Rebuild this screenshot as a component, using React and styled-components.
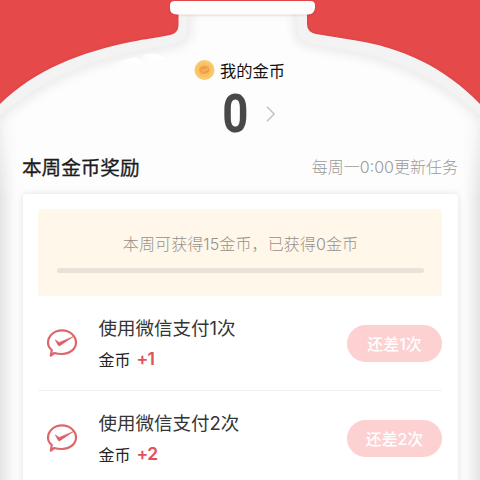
import React from 'react';
import styled, { createGlobalStyle } from 'styled-components';

const GlobalStyle = createGlobalStyle`
  * { box-sizing: border-box; }
  body {
    margin: 0;
    overflow: hidden;
    background: #e6494a;
    font-family: "Noto Sans CJK SC", "Noto Sans", sans-serif;
  }
`;

const Page = styled.main`
  position: relative;
  width: 480px;
  height: 480px;
  overflow: hidden;
  background: #e6494a;
`;

const BottleArt = styled.svg`
  position: absolute;
  inset: 0;
  display: block;
`;

const Content = styled.div`
  position: relative;
  display: flex;
  flex-direction: column;
  padding: 58px 22px 0 23px;
`;

const Balance = styled.header`
  display: flex;
  flex-direction: column;
`;

const BalanceLabel = styled.div`
  display: flex;
  align-items: center;
  gap: 5px;
  height: 24px;
  padding-left: 171px;
  font-size: 16.3px;
  line-height: 24px;
  color: #111;
`;

const BalanceValue = styled.div`
  display: flex;
  align-items: center;
  gap: 16px;
  height: 64px;
  padding-left: 197px;
`;

const Amount = styled.strong`
  font: 700 53px/64px Roboto, sans-serif;
  color: #48484a;
  transform: scaleX(0.86);
`;

const SectionHead = styled.div`
  display: flex;
  align-items: center;
  justify-content: space-between;
  height: 41px;
  margin: 0 0 7px -1px;
`;

const SectionTitle = styled.h2`
  margin: 0;
  font-size: 19.6px;
  font-weight: 400;
  line-height: 30px;
  color: #1c1c1c;
  -webkit-text-stroke: 0.3px #1c1c1c;
`;

const Digits = styled.span`
  font-family: Inter, sans-serif;
`;

const RefreshNote = styled.span`
  font-size: 16px;
  font-weight: 300;
  line-height: 24px;
  color: #999;
`;

const Card = styled.section`
  height: 310px;
  padding: 15px 16px 0 15px;
  border-radius: 3px;
  background: #fff;
  box-shadow: 0 0 6px rgba(0, 0, 0, 0.12);
`;

const Progress = styled.div`
  display: flex;
  flex-direction: column;
  align-items: center;
  height: 87px;
  padding: 22px 18px 0 19px;
  border-radius: 2px;
  background: #fef7ea;
`;

const ProgressText = styled.p`
  margin: 0;
  font-size: 16px;
  letter-spacing: 0.1px;
  font-weight: 300;
  line-height: 24px;
  white-space: nowrap;
  color: #96918b;
`;

const Track = styled.div`
  width: 100%;
  height: 5px;
  margin-top: 12px;
  border-radius: 3px;
  background: #eae2d8;
`;

const TaskList = styled.ul`
  margin: 0;
  padding: 0;
  list-style: none;
`;

const Task = styled.li`
  display: flex;
  align-items: center;
  height: 95px;
  padding-left: 8px;
  border-bottom: 1px solid #f2f2f2;
`;

const TaskBody = styled.div`
  flex: 1;
  margin: 0 0 0 20.5px;
`;

const TaskTitle = styled.div`
  font-size: 18.5px;
  line-height: 31px;
  color: #353535;
`;

const TaskReward = styled.div`
  display: flex;
  gap: 6px;
  font-size: 16px;
  line-height: 30px;
  color: #222;
`;

const Gain = styled.span`
  font-family: Inter, sans-serif;
  font-size: 17.5px;
  font-weight: 600;
  letter-spacing: -0.7px;
  color: #df5157;
`;

const Remaining = styled.button`
  width: 95px;
  height: 37px;
  padding: 0;
  border: 0;
  border-radius: 19px;
  background: #fdd0d1;
  color: #fff;
  font: 500 15.9px/37px "Noto Sans CJK SC", sans-serif;
`;

const OUTER =
  'M178.5 8V25Q178.5 33 170 35C155 38 145 39 133 41.5C80 52 35 70 0 104V490H480V104C445 67 400 47 353 40L316 34Q307 32 307 24V8Z';
const INNER =
  'M187 8V30Q187 40 176 43C158 47 146 49 135 51C80 62 38 82 -6 120V500H486V120C444 80 398 59 350 50L310 43Q298 40 298 30V8Z';

const Bottle = () => (
  <BottleArt width="480" height="480" viewBox="0 0 480 480" aria-hidden="true">
    <defs>
      <clipPath id="inside">
        <path d={INNER} />
      </clipPath>
      <filter id="soft" x="-20%" y="-20%" width="140%" height="140%">
        <feGaussianBlur stdDeviation="5" />
      </filter>
      <filter id="edge" x="-10%" y="-10%" width="120%" height="120%">
        <feGaussianBlur stdDeviation="1.6" />
      </filter>
      <linearGradient id="glint" x1="0" y1="1" x2="1" y2="0">
        <stop offset="0" stopColor="#fff" stopOpacity="0" />
        <stop offset="0.6" stopColor="#fff" />
      </linearGradient>
      <linearGradient id="wallLeft">
        <stop offset="0" stopColor="#e4e4e4" />
        <stop offset="0.4" stopColor="#f1f1f1" />
        <stop offset="1" stopColor="#fcfcfc" stopOpacity="0" />
      </linearGradient>
      <linearGradient id="wallRight" x1="1" x2="0">
        <stop offset="0" stopColor="#e4e4e4" />
        <stop offset="0.4" stopColor="#f1f1f1" />
        <stop offset="1" stopColor="#fcfcfc" stopOpacity="0" />
      </linearGradient>
      <linearGradient id="wallFade" gradientUnits="userSpaceOnUse" x1="0" y1="105" x2="0" y2="200">
        <stop offset="0" stopColor="#000" />
        <stop offset="1" stopColor="#fff" />
      </linearGradient>
      <mask id="wallMask" maskUnits="userSpaceOnUse" x="0" y="0" width="480" height="480">
        <rect width="480" height="480" fill="url(#wallFade)" />
      </mask>
    </defs>
    <path d={OUTER} fill="#a82f32" opacity="0.35" filter="url(#edge)" />
    <path d={OUTER} fill="#f3f3f3" />
    <g clipPath="url(#inside)">
      <path d={INNER} fill="#fdfdfd" />
      <path d={INNER} fill="none" stroke="#e9e9e9" strokeWidth="9" filter="url(#soft)" />
      <g mask="url(#wallMask)">
        <rect y="100" width="20" height="380" fill="url(#wallLeft)" />
        <rect x="460" y="100" width="20" height="380" fill="url(#wallRight)" />
      </g>
    </g>
    <path d="M112 65Q126 59 136 57Q138 60 145 63Q134 66 127 66Z" fill="url(#glint)" />
    <path d="M141 56Q148 53 157 54L167 59Q158 59 151 62Q145 60 141 56Z" fill="url(#glint)" />
    <rect x="170" y="1" width="145" height="14" rx="5" fill="#9b2b2e" opacity="0.2" filter="url(#edge)" />
    <path d="M175 1H310Q315 1 315 5V8Q314 14.5 308 14.5H177Q170 14.5 170 8V5Q170 1 175 1Z" fill="#fdfdfd" />
  </BottleArt>
);

const Coin = () => (
  <svg width="21" height="20" viewBox="0 0 21 20" aria-hidden="true">
    <circle cx="10.5" cy="10" r="10" fill="#f6ca6d" />
    <circle cx="10.5" cy="10" r="7.3" fill="#fbbf62" />
    <path d="M10.5 5.8c-3 0-5.2 1.8-5.2 4 0 1.2.6 2.2 1.6 2.9l-.4 1.6 2-.8c.6.2 1.3.3 2 .3 3 0 5.2-1.8 5.2-4s-2.2-4-5.2-4Z" fill="#f0a04a" />
    <path d="m7.8 9.6 1.7 1.5 5-2.7" fill="none" stroke="#fbc266" strokeWidth="1" />
  </svg>
);

const Chevron = () => (
  <svg width="10" height="16" viewBox="0 0 10 16" aria-hidden="true">
    <path d="m1 0.8 7.2 7.2L1 15.2" fill="none" stroke="#bdbdbd" strokeWidth="1.3" />
  </svg>
);

const PayIcon = () => (
  <svg width="32" height="30" viewBox="0 0 32 30" aria-hidden="true">
    <path
      d="M8.3 25 4.8 27.6 5.8 22C3.4 20.1 2 17.6 2 14.8 2 7.9 8.2 2.4 16 2.4S30 7.9 30 14.5 23.8 26 16 26C13.2 26 10.6 25.7 8.3 25Z"
      fill="none"
      stroke="#dd666b"
      strokeWidth="2.2"
      strokeLinejoin="round"
    />
    <path d="M9.2 11.8 13.2 14.4 28 8.2 13.9 17.7Q12.8 18.4 12.1 17.2Z" fill="#dd5e64" stroke="#dd5e64" strokeWidth="0.5" />
  </svg>
);

const tasks = [1, 2];

export default function App() {
  return (
    <>
      <GlobalStyle />
      <Page lang="zh-CN">
        <Bottle />
        <Content>
          <Balance>
            <BalanceLabel>
              <Coin />
              我的金币
            </BalanceLabel>
            <BalanceValue>
              <Amount>0</Amount>
              <Chevron />
            </BalanceValue>
          </Balance>
          <SectionHead>
            <SectionTitle>本周金币奖励</SectionTitle>
            <RefreshNote>
              每周一<Digits>0:00</Digits>更新任务
            </RefreshNote>
          </SectionHead>
          <Card>
            <Progress>
              <ProgressText>
                本周可获得<Digits>15</Digits>金币，已获得<Digits>0</Digits>金币
              </ProgressText>
              <Track />
            </Progress>
            <TaskList>
              {tasks.map((n) => (
                <Task key={n}>
                  <PayIcon />
                  <TaskBody>
                    <TaskTitle>
                      使用微信支付<Digits>{n}</Digits>次
                    </TaskTitle>
                    <TaskReward>
                      金币 <Gain>+{n}</Gain>
                    </TaskReward>
                  </TaskBody>
                  <Remaining>
                    还差<Digits>{n}</Digits>次
                  </Remaining>
                </Task>
              ))}
            </TaskList>
          </Card>
        </Content>
      </Page>
    </>
  );
}
